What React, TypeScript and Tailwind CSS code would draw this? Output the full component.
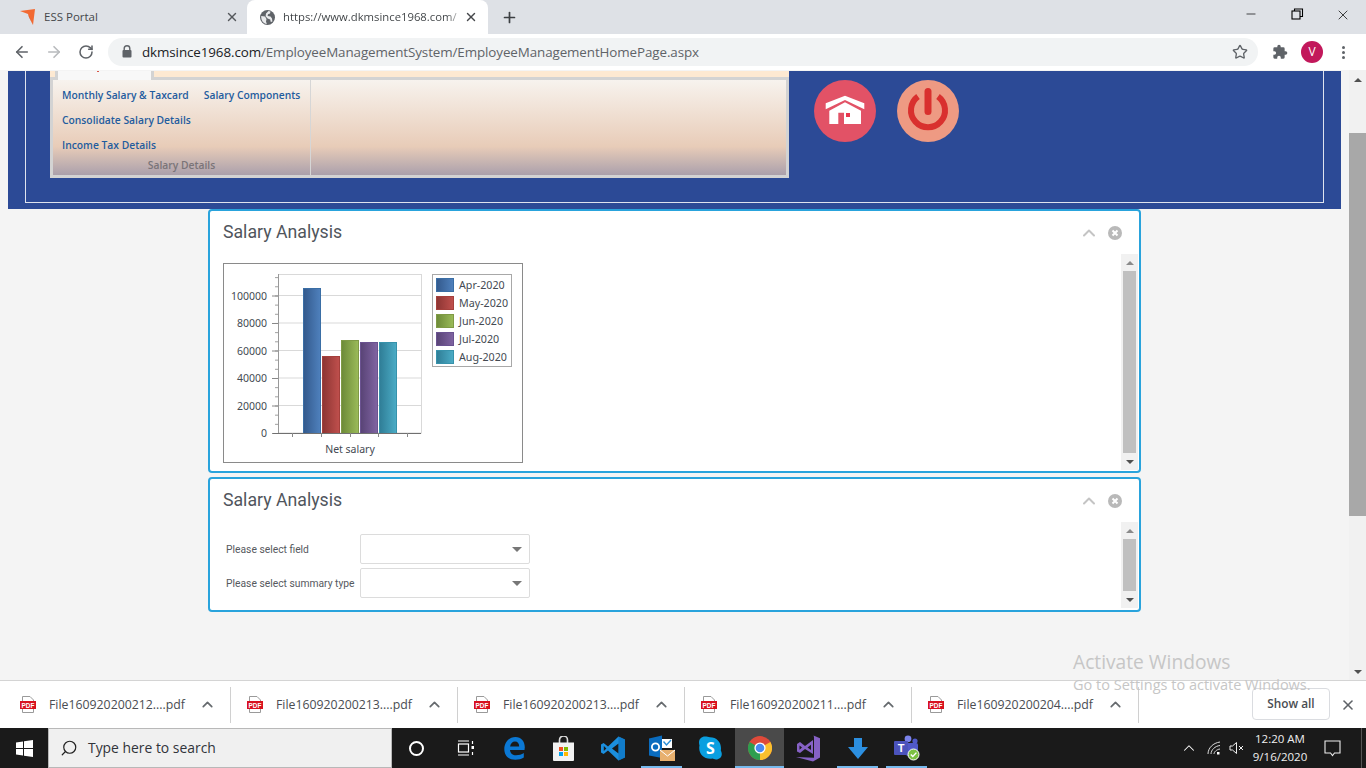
import React from "react";
import { ArrowLeft, ArrowRight, RotateCw, Star, X, Plus, ChevronUp, Search, Minus } from "lucide-react";

const sans = "font-['Open_Sans','Noto_Sans',sans-serif]";
const roboto = "font-['Roboto',sans-serif]";

function Favicon() {
  return (
    <svg width="18" height="18" viewBox="0 0 18 18" className="shrink-0">
      <path d="M1 3 L16 1 L14 17 L10 9 L9 6 Z" fill="#f26a33" />
      <path d="M9 6 L14 17 L10 9 Z" fill="#c9481c" />
    </svg>
  );
}

function GlobeFilled() {
  return (
    <svg width="15" height="15" viewBox="0 0 15 15" className="shrink-0">
      <circle cx="7.5" cy="7.5" r="7.5" fill="#5f6368" />
      <path d="M1.2 6 L5 6.5 L6.5 9 L6 11.5 L6.8 14 C3.5 13.6 1 11 1.2 6 Z" fill="#e8e9eb" />
      <path d="M8.5 1 L10.5 1.6 L10 3.5 L8 4.2 L7.6 6 L10.5 6.6 L12 8.5 L12.4 11.5 L10.8 12 L10.2 9.5 L7.6 8.6 L5.6 6.2 L6 3.6 Z" fill="#e8e9eb" />
    </svg>
  );
}

function TabBar() {
  return (
    <div className={`h-[34px] bg-[#dee1e6] flex items-end shrink-0 text-[11.5px] ${sans}`}>
      <div className="w-[247px] h-[34px] flex items-center pl-[19px] shrink-0">
        <Favicon />
        <span className="ml-[7px] text-[#45474a] flex-1">ESS Portal</span>
        <X size={14} strokeWidth={2.4} className="mr-[8px] text-[#55585c]" />
      </div>
      <div className="w-[241px] h-[34px] bg-white rounded-t-[8px] flex items-center pl-[13px] shrink-0">
        <GlobeFilled />
        <span className="ml-[8px] w-[181px] text-[11.3px] whitespace-nowrap text-transparent bg-clip-text bg-gradient-to-r from-[#3c4043] from-[90%] to-[#ffffff] to-[100%]">https://www.dkmsince1968.com/</span>
        <X size={14} strokeWidth={2.4} className="text-[#45474a]" />
      </div>
      <div className="h-[34px] flex items-center ml-[13px]">
        <Plus size={17} strokeWidth={2.4} className="text-[#3c4043]" />
      </div>
      <div className="flex-1" />
      <div className="h-[34px] flex items-start pt-[7px] text-black">
        <Minus size={14} strokeWidth={1.2} className="mr-[32px]" />
        <svg width="14" height="14" viewBox="0 0 14 14" className="mr-[31px]" fill="none" stroke="#000" strokeWidth="1.1">
          <rect x="2" y="4" width="8" height="8" />
          <path d="M4.5 4 V2 H12.5 V9.5 H10" />
        </svg>
        <X size={16} strokeWidth={1.1} className="mr-[15px]" />
      </div>
    </div>
  );
}

function AddressBar() {
  return (
    <div className={`h-[36px] bg-white flex items-center shrink-0 ${sans}`}>
      <ArrowLeft size={18} strokeWidth={2.2} className="ml-[13px] text-[#5f6368]" />
      <ArrowRight size={18} strokeWidth={2.2} className="ml-[14px] text-[#b8babd]" />
      <RotateCw size={16} strokeWidth={2.3} className="ml-[15px] text-[#5f6368]" />
      <div className="ml-[14px] w-[1150px] h-[28px] rounded-[14px] bg-[#f1f3f4] flex items-center pl-[34px] pr-[10px] relative">
        <svg width="10" height="13" viewBox="0 0 10 13" className="absolute left-[14px] top-[7px]">
          <path d="M2.2 5.5 V3.5 a2.8 2.8 0 0 1 5.6 0 V5.5" stroke="#5f6368" strokeWidth="1.4" fill="none" />
          <rect x="0.5" y="5" width="9" height="7.5" rx="1" fill="#5f6368" />
        </svg>
        <span className="text-[13.4px] tracking-[-0.1px] whitespace-nowrap flex-1">
          <span className="text-[#202124]">dkmsince1968.com</span>
          <span className="text-[#5f6368]">/EmployeeManagementSystem/EmployeeManagementHomePage.aspx</span>
        </span>
        <Star size={16} strokeWidth={2} className="text-[#5f6368]" />
      </div>
      <svg width="16" height="16" viewBox="0 0 24 24" className="ml-[14px]" fill="#5f6368">
        <path d="M20.5 11H19V7a2 2 0 0 0-2-2h-4V3.5a2.5 2.5 0 0 0-5 0V5H4a2 2 0 0 0-2 2v3.8h1.5a2.7 2.7 0 0 1 0 5.4H2V20a2 2 0 0 0 2 2h3.8v-1.5a2.7 2.7 0 0 1 5.4 0V22H17a2 2 0 0 0 2-2v-4h1.5a2.5 2.5 0 0 0 0-5z" />
      </svg>
      <div className="ml-[13px] w-[22px] h-[22px] rounded-full bg-[#c2185b] text-white text-[12px] flex items-center justify-center">V</div>
      <div className="ml-[19px] flex flex-col gap-[2px]">
        <span className="w-[3px] h-[3px] rounded-full bg-[#5f6368]" />
        <span className="w-[3px] h-[3px] rounded-full bg-[#5f6368]" />
        <span className="w-[3px] h-[3px] rounded-full bg-[#5f6368]" />
      </div>
    </div>
  );
}

function Ribbon() {
  const link = "text-[#1f5c9e] text-[10.3px] font-semibold whitespace-nowrap leading-[15px]";
  return (
    <div className={`w-[739px] h-[107px] flex flex-col shrink-0 ${sans}`}>
      <div className="h-[9px] flex shrink-0">
        <div className="w-[5px] bg-[#fde9d2] border-b-[3px] border-[#d3d3d3]" />
        <div className="w-[99px] bg-[#f8f8f8] border-x-[3px] border-[#d3d3d3] relative">
          <span className="absolute left-[39px] top-0 w-[2px] h-[1px] bg-[#d9584a]" />
        </div>
        <div className="flex-1 bg-[#fde9d2] border-b-[3px] border-[#d3d3d3]" />
      </div>
      <div className="flex-1 border-[3px] border-t-0 border-[#d3d3d3] flex bg-gradient-to-b from-[#f7f3ee] via-[#e8ccb8] via-70% to-[#aba0ab]">
        <div className="w-[258px] h-full border-r-[1px] border-[#d6d6d6] relative pl-[9px] pt-[8px]">
          <div className="flex gap-[15px]">
            <span className={link}>Monthly Salary &amp; Taxcard</span>
            <span className={link}>Salary Components</span>
          </div>
          <div className={`${link} mt-[10px]`}>Consolidate Salary Details</div>
          <div className={`${link} mt-[10px]`}>Income Tax Details</div>
          <div className="absolute left-0 right-0 bottom-[3px] text-center text-[10.3px] font-semibold leading-[14px] text-[#7a7478]">Salary Details</div>
        </div>
        <div className="flex-1" />
      </div>
    </div>
  );
}

function HomeButton() {
  return (
    <svg width="62" height="62" viewBox="0 0 62 62" className="shrink-0">
      <circle cx="31" cy="31" r="31" fill="#e25266" />
      <path d="M11.7 23.3 L31 15.7 L50.3 23.3 V29.3 L31 20 L11.7 29.3 Z" fill="#fff" />
      <path d="M15.3 30.7 L31 22.3 L47 30.7 V44 H30 V32.7 H24.3 V44 H15.3 Z" fill="#fff" />
      <rect x="32" y="33" width="4" height="4" fill="#e8384f" />
    </svg>
  );
}

function PowerButton() {
  return (
    <svg width="62" height="62" viewBox="0 0 62 62" className="shrink-0">
      <circle cx="31" cy="31" r="31" fill="#ee9a83" />
      <path d="M21 16.5 A17 17 0 1 0 41 16.5" fill="none" stroke="#d9302e" strokeWidth="6" />
      <rect x="27.5" y="8" width="7" height="27" rx="3.5" fill="#d9302e" />
    </svg>
  );
}

function Header() {
  return (
    <div className="h-[138px] bg-[#2c4a96] px-[17px] pb-[6px] shrink-0">
      <div className="h-full border-x border-b border-[#dfe3ee] pl-[24px] flex items-start">
        <Ribbon />
        <div className="flex gap-[21px] ml-[25px] mt-[9px]">
          <HomeButton />
          <PowerButton />
        </div>
      </div>
    </div>
  );
}

function Chart() {
  const bars = [
    { x: 80, w: 18, top: 25, from: "a", label: "Apr-2020" },
    { x: 99, w: 18, top: 93, from: "b", label: "May-2020" },
    { x: 118, w: 18, top: 77, from: "c", label: "Jun-2020" },
    { x: 137, w: 18, top: 79, from: "d", label: "Jul-2020" },
    { x: 156, w: 18, top: 79, from: "e", label: "Aug-2020" },
  ];
  const strokes: Record<string, string> = { a: "#3a6ea5", b: "#a5403c", c: "#7f9a45", d: "#6a5290", e: "#3792ab" };
  const grads: Record<string, [string, string]> = {
    a: ["#33598c", "#4f81bd"],
    b: ["#8c3533", "#c0504d"],
    c: ["#6c8a38", "#9bbb59"],
    d: ["#584375", "#8064a2"],
    e: ["#2f7d96", "#4bacc6"],
  };
  const ticks = [0, 20000, 40000, 60000, 80000, 100000];
  const y = (v: number) => 170 - (v / 100000) * 137.5;
  return (
    <div className="w-[300px] h-[200px] border border-[#8a8a8a] bg-white shrink-0">
      <svg width="298" height="198" viewBox="1 1 298 198" className="block" style={{ fontFamily: "Noto Sans, sans-serif" }}>
        <defs>
          {Object.entries(grads).map(([k, [a, b]]) => (
            <linearGradient id={`g${k}`} key={k} x1="0" x2="1" y1="0" y2="0">
              <stop offset="0" stopColor={a} />
              <stop offset="1" stopColor={b} />
            </linearGradient>
          ))}
        </defs>
        <rect x="55.5" y="11.5" width="143" height="158.5" fill="#fff" stroke="#d9d9d9" />
        {ticks.slice(1).map((t) => (
          <line key={t} x1="55" x2="198" y1={y(t)} y2={y(t)} stroke="#d9d9d9" />
        ))}
        {Array.from({ length: 18 }).map((_, i) => (
          <line key={i} x1="52" x2="55" y1={170.5 - i * 9.17} y2={170.5 - i * 9.17} stroke="#a0a0a0" />
        ))}
        <line x1="55.5" x2="55.5" y1="11" y2="170" stroke="#999" />
        {ticks.map((t) => (
          <g key={t}>
            <line x1="49" x2="55" y1={y(t) + 0.5} y2={y(t) + 0.5} stroke="#888" />
            <text x="44" y={y(t) + 4} textAnchor="end" fontSize="10.5" fill="#444a52">{t}</text>
          </g>
        ))}
        {bars.map((b) => (
          <rect key={b.x} x={b.x + 0.5} y={b.top + 0.5} width={b.w - 1} height={170 - b.top} fill={`url(#g${b.from})`} stroke={strokes[b.from]} />
        ))}
        <line x1="50" x2="198" y1="170.5" y2="170.5" stroke="#707070" />
        {[69, 98, 127, 155, 184].map((x) => (
          <line key={x} x1={x + 0.5} x2={x + 0.5} y1="170" y2="174" stroke="#888" />
        ))}
        <text x="127" y="190" textAnchor="middle" fontSize="10.5" fill="#444a52">Net salary</text>
        <rect x="209.5" y="11.5" width="79" height="92" fill="#fff" stroke="#a8a8a8" />
        {bars.map((b, i) => (
          <g key={b.label}>
            <rect x="213.5" y={15.5 + i * 18} width="17" height="13" fill={`url(#g${b.from})`} stroke={strokes[b.from]} />
            <text x="236" y={26 + i * 18} fontSize="10.7" fill="#444a52">{b.label}</text>
          </g>
        ))}
      </svg>
    </div>
  );
}

function PanelScrollbar({ bottom }: { bottom: string }) {
  return (
    <div className={`absolute right-[1px] top-[43px] ${bottom} w-[17px] bg-[#f1f1f1] flex flex-col items-center`}>
      <div className="h-[17px] w-full flex items-center justify-center">
        <span className="w-0 h-0 border-x-[4px] border-x-transparent border-b-[4px] border-b-[#8a8a8a]" />
      </div>
      <div className="w-[13px] flex-1 bg-[#c0c0c0]" />
      <div className="h-[17px] w-full flex items-center justify-center">
        <span className="w-0 h-0 border-x-[4px] border-x-transparent border-t-[4px] border-t-[#505050]" />
      </div>
    </div>
  );
}

function Panel({ height, bottom, children }: { height: string; bottom: string; children: React.ReactNode }) {
  return (
    <div className={`w-[933px] ${height} bg-white border-2 border-[#29a3dc] rounded-[4px] relative pl-[13px] shrink-0 ${roboto}`}>
      <div className="h-[41px] pt-[2px] flex items-center text-[17.7px] text-[#50555c]">Salary Analysis</div>
      <ChevronUp size={20} strokeWidth={2.4} className="absolute right-[40px] top-[12px] text-[#c4c4c4]" />
      <svg width="14" height="14" viewBox="0 0 14 14" className="absolute right-[17px] top-[15px]">
        <circle cx="7" cy="7" r="7" fill="#b9b9b9" />
        <path d="M4.5 4.5 L9.5 9.5 M9.5 4.5 L4.5 9.5" stroke="#fff" strokeWidth="2" />
      </svg>
      {children}
      <PanelScrollbar bottom={bottom} />
    </div>
  );
}

function SelectRow({ label }: { label: string }) {
  return (
    <div className="flex items-center h-[30px]">
      <span className="w-[137px] pl-[3px] pt-[2px] text-[10.3px] text-[#56595e] whitespace-nowrap">{label}</span>
      <div className="w-[170px] h-[30px] border border-[#dcdcdc] rounded-[2px] flex items-center justify-end pr-[7px]">
        <span className="w-0 h-0 border-x-[5px] border-x-transparent border-t-[5px] border-t-[#777]" />
      </div>
    </div>
  );
}

function PageScrollbar() {
  return (
    <div className="w-[17px] h-full bg-[#f1f1f1] flex flex-col items-center shrink-0">
      <div className="h-[63px] w-full pt-[8px] flex justify-center items-start">
        <span className="w-0 h-0 border-x-[4px] border-x-transparent border-b-[4px] border-b-[#505050]" />
      </div>
      <div className="w-full h-[383px] bg-[#a8a8a8]" />
      <div className="flex-1" />
      <div className="pb-[6px]">
        <span className="block w-0 h-0 border-x-[4px] border-x-transparent border-t-[4px] border-t-[#505050]" />
      </div>
    </div>
  );
}

function Main() {
  return (
    <div className="flex-1 bg-[#f4f4f4] flex min-h-0 overflow-hidden relative">
      <div className="flex-1 pl-[8px] pr-[8px] pt-[1px] flex flex-col items-stretch">
        <Header />
        <div className="flex flex-col gap-[4px] pl-[200px]">
          <Panel height="h-[264px]" bottom="bottom-[1px]">
            <div className="mt-[11px]">
              <Chart />
            </div>
          </Panel>
          <Panel height="h-[135px]" bottom="bottom-[2px]">
            <div className="mt-[14px] flex flex-col gap-[4px]">
              <SelectRow label="Please select field" />
              <SelectRow label="Please select summary type" />
            </div>
          </Panel>
        </div>
      </div>
      <PageScrollbar />
    </div>
  );
}

function PdfIcon() {
  return (
    <svg width="18" height="18" viewBox="0 0 18 18" className="shrink-0">
      <path d="M3.5 0.5 H11 L14.5 4 V16.5 H3.5 Z" fill="#fff" stroke="#9a9a9a" />
      <rect x="1" y="5" width="16" height="8" fill="#d8121f" />
      <text x="9" y="11.6" textAnchor="middle" fontSize="6.4" fontWeight="700" fill="#fff" style={{ fontFamily: "Liberation Sans, sans-serif" }}>PDF</text>
    </svg>
  );
}

function DownloadBar() {
  const files = ["File160920200212....pdf", "File160920200213....pdf", "File160920200213....pdf", "File160920200211....pdf", "File160920200204....pdf"];
  return (
    <div className={`h-[48px] bg-white border-t border-[#d4d4d4] flex items-center shrink-0 ${sans}`}>
      <div className="flex pl-[4px]">
        {files.map((f, i) => (
          <div key={i} className="w-[227px] h-[36px] flex items-center pl-[15px] border-r border-[#d0d0d0]">
            <PdfIcon />
            <span className="ml-[12px] pt-[2px] text-[12.3px] text-[#4a4d52] w-[140px] whitespace-nowrap">{f}</span>
            <ChevronUp size={17} strokeWidth={2.4} className="ml-[10px] text-[#666a6e]" />
          </div>
        ))}
      </div>
      <div className="flex-1" />
      <div className="w-[78px] h-[32px] mb-[2px] border border-[#dadce0] rounded-[4px] flex items-center justify-center text-[11.8px] font-semibold text-[#4a4d52]">Show all</div>
      <X size={16} strokeWidth={2.4} className="ml-[10px] mr-[10px] text-[#5f6368]" />
    </div>
  );
}

function ChromeIcon() {
  return (
    <svg width="24" height="24" viewBox="0 0 24 24">
      <circle cx="12" cy="12" r="12" fill="#de4a3a" />
      <path d="M12 12 L22.4 6 A12 12 0 0 1 12 24 Z" fill="#fbc02d" />
      <path d="M12 12 L12 24 A12 12 0 0 1 1.6 6 Z" fill="#2e9e4f" />
      <circle cx="12" cy="12" r="5.6" fill="#fff" />
      <circle cx="12" cy="12" r="4.3" fill="#4a89f0" />
    </svg>
  );
}

function Slot({ children, active, under }: { children: React.ReactNode; active?: boolean; under?: boolean }) {
  return (
    <div className={`w-[49px] h-full flex items-center justify-center relative shrink-0 ${active ? "bg-[#4a4a4a]" : ""}`}>
      {children}
      {under && <span className={`absolute bottom-0 h-[2px] bg-[#76b9ed] ${active ? "left-0 right-0" : "left-[4px] right-[4px]"}`} />}
    </div>
  );
}

function Taskbar() {
  return (
    <div className={`h-[40px] bg-[#1a1a1a] flex items-stretch shrink-0 text-white ${sans}`}>
      <div className="w-[48px] flex items-center justify-center shrink-0">
        <svg width="17" height="17" viewBox="0 0 17 17" fill="#fff">
          <path d="M0 2.4 L7 1.4 V8 H0 Z M8 1.2 L17 0 V8 H8 Z M0 9 H7 V15.6 L0 14.6 Z M8 9 H17 V17 L8 15.8 Z" />
        </svg>
      </div>
      <div className="w-[344px] bg-[#f0f0f0] border border-[#b8b8b8] flex items-center pl-[11px] shrink-0">
        <Search size={18} strokeWidth={1.6} className="text-[#222] -scale-x-100" />
        <span className="ml-[10px] text-[13.9px] text-[#30343a]">Type here to search</span>
      </div>
      <Slot>
        <span className="w-[15px] h-[15px] rounded-full border-[2px] border-white" />
      </Slot>
      <Slot>
        <svg width="18" height="16" viewBox="0 0 18 16" fill="none" stroke="#fff" strokeWidth="1.2">
          <path d="M1 1 H12 M1 15 H12" />
          <rect x="1.5" y="4" width="10" height="8" />
          <path d="M15.5 1 V4 M15.5 12 V15" />
          <rect x="14.5" y="6" width="2.5" height="3" fill="#fff" stroke="none" />
        </svg>
      </Slot>
      <Slot>
        <svg width="21" height="24" viewBox="0 0 21 24">
          <path d="M20.5 14 H6 C6.3 17.5 8.8 19.3 12 19.3 C15 19.3 17.7 18.3 19.8 17 V21.6 C17.5 23 14.6 23.8 11.3 23.8 C4.6 23.8 0.3 19.7 0.3 13 C0.3 6.2 5.2 1 11.4 1 C17.3 1 20.8 5.3 20.8 11.3 Z M6.1 10.5 H15.2 C15.2 7.6 13.8 5.5 11 5.5 C8.4 5.5 6.5 7.6 6.1 10.5 Z" fill="#0b78d4" />
        </svg>
      </Slot>
      <Slot>
        <svg width="23" height="25" viewBox="0 0 23 25">
          <path d="M7.5 7 V4 a4 4 0 0 1 8 0 V7" fill="none" stroke="#ddd" strokeWidth="1.6" />
          <path d="M1 6.5 H22 V24 a1 1 0 0 1 -1 1 H2 a1 1 0 0 1 -1 -1 Z" fill="#f2f2f2" />
          <rect x="7" y="11" width="4" height="4" fill="#f25022" />
          <rect x="12" y="11" width="4" height="4" fill="#7fba00" />
          <rect x="7" y="16" width="4" height="4" fill="#00a4ef" />
          <rect x="12" y="16" width="4" height="4" fill="#ffb900" />
        </svg>
      </Slot>
      <Slot>
        <svg width="24" height="25" viewBox="0 0 24 25">
          <path d="M17.5 0.5 L24 3.5 V21.5 L17.5 24.5 L7 14.5 L2.6 18 L0 16.5 V8.5 L2.6 7 L7 10.5 Z M17.5 7.5 L11 12.5 L17.5 17.5 Z M2.8 10 V15 L5.4 12.5 Z" fill="#1b8fde" />
          <path d="M17.5 0.5 L24 3.5 V21.5 L17.5 24.5 Z M17.5 7.5 V17.5 Z" fill="#0b6fbd" opacity="0.6" />
        </svg>
      </Slot>
      <Slot under>
        <svg width="26" height="26" viewBox="0 0 26 26">
          <path d="M0 3.5 L13 0.5 V23 L0 20.5 Z" fill="#0a6cbf" />
          <circle cx="6.5" cy="12" r="3.6" fill="none" stroke="#fff" strokeWidth="1.8" />
          <rect x="13" y="4" width="10" height="9" fill="#fff" />
          <path d="M14.5 6.5 L17.5 10 L22 5" fill="none" stroke="#2c8fd8" strokeWidth="1.4" />
          <rect x="11" y="15" width="15" height="11" fill="#e8b06e" />
          <path d="M11 15 L18.5 21 L26 15" fill="none" stroke="#fff" strokeWidth="1" />
        </svg>
      </Slot>
      <Slot>
        <svg width="23" height="24" viewBox="0 0 23 24">
          <path d="M6 0.5 C8 0.5 9.4 1 11 1.3 C17.5 1.3 22 6 22 12.2 C22 13.2 21.9 13.8 21.8 14.6 C22.4 15.6 22.8 16.8 22.8 18 C22.8 21.2 20.2 23.5 17 23.5 C15.6 23.5 14.3 23 13.4 22.6 C12.6 22.8 12 22.8 11.2 22.8 C5 22.8 0.2 18.3 0.2 12 C0.2 11 0.3 10.2 0.5 9.4 C0.2 8.4 0 7.6 0 6.4 C0 3 2.6 0.5 6 0.5 Z" fill="#0a9fe0" />
          <text x="11.4" y="18" textAnchor="middle" fontSize="16" fontWeight="700" fill="#fff" style={{ fontFamily: "Open Sans, sans-serif" }}>S</text>
        </svg>
      </Slot>
      <Slot active under>
        <ChromeIcon />
      </Slot>
      <Slot>
        <svg width="25" height="27" viewBox="0 0 25 27">
          <path d="M17.5 0.5 L24 3.2 V22.5 L17 26.5 L0 22 L18 22.8 V2 Z" fill="#8661c5" />
          <path d="M1 9 L4 7 L9 11 L17 5 V19 L9 14 L4 18 L1 16.5 Z M3.5 10.5 V14.8 L6 12.6 Z M11.5 12.5 L15 15 V9.8 Z" fill="#8661c5" fillRule="evenodd" />
        </svg>
      </Slot>
      <Slot under>
        <svg width="20" height="21" viewBox="0 0 20 21">
          <path d="M6 0 H14 V9 H20 L10 21 L0 9 H6 Z" fill="#2c8fe0" />
        </svg>
      </Slot>
      <Slot under>
        <svg width="26" height="26" viewBox="0 0 26 26">
          <circle cx="14" cy="3.8" r="3.4" fill="#7b83eb" />
          <circle cx="21" cy="6" r="2.6" fill="#5059c9" />
          <rect x="12" y="8" width="12" height="13" rx="2" fill="#5059c9" />
          <rect x="0" y="6" width="14" height="14" rx="1" fill="#4b53bc" />
          <text x="7" y="17" textAnchor="middle" fontSize="11" fontWeight="700" fill="#fff" style={{ fontFamily: "Liberation Sans, sans-serif" }}>T</text>
          <circle cx="19.5" cy="19.5" r="5.5" fill="#7cc143" stroke="#fff" strokeWidth="1" />
          <path d="M16.8 19.5 L18.8 21.5 L22.4 17.6" fill="none" stroke="#fff" strokeWidth="1.4" />
        </svg>
      </Slot>
      <div className="flex-1" />
      <div className="flex items-center">
        <ChevronUp size={18} strokeWidth={1.4} className="mr-[8px]" />
        <svg width="16" height="16" viewBox="0 0 16 16" fill="none" stroke="#ddd" strokeWidth="1" className="mr-[7px]">
          <path d="M2 14 C2 8 7 3 14 2 M5 14 C5 10 9 6 14 5.5 M8 14 C8 12 10.5 9.5 14 9" />
          <rect x="11" y="12" width="2.5" height="2.5" fill="#fff" stroke="none" />
        </svg>
        <svg width="16" height="16" viewBox="0 0 16 16" fill="none" stroke="#eee" strokeWidth="1" className="mr-[1px]">
          <path d="M1 6 H3.5 L7.5 2.5 V13.5 L3.5 10 H1 Z" />
          <path d="M10 6 L14 10 M14 6 L10 10" />
        </svg>
        <div className="w-[68px] text-center text-[11.5px] leading-[18px] text-[#f0f0f0]">
          <div>12:20 AM</div>
          <div>9/16/2020</div>
        </div>
        <svg width="17" height="17" viewBox="0 0 17 17" fill="none" stroke="#eee" strokeWidth="1.1" className="ml-[10px] mr-[20px]">
          <path d="M1 1 H16 V13 H10.5 L8.5 15.5 L6.5 13 H1 Z" />
        </svg>
        <span className="w-[5px] h-full border-l border-[#555]" />
      </div>
    </div>
  );
}

export default function App() {
  return (
    <div className="w-[1366px] h-[768px] flex flex-col overflow-hidden relative">
      <TabBar />
      <AddressBar />
      <Main />
      <DownloadBar />
      <Taskbar />
      <div className={`absolute left-[1073px] top-[649px] text-[#c6c6c6] pointer-events-none whitespace-nowrap ${sans}`}>
        <div className="text-[19.2px] leading-[26px]">Activate Windows</div>
        <div className="text-[14.5px] leading-[20px]">Go to Settings to activate Windows.</div>
      </div>
    </div>
  );
}
